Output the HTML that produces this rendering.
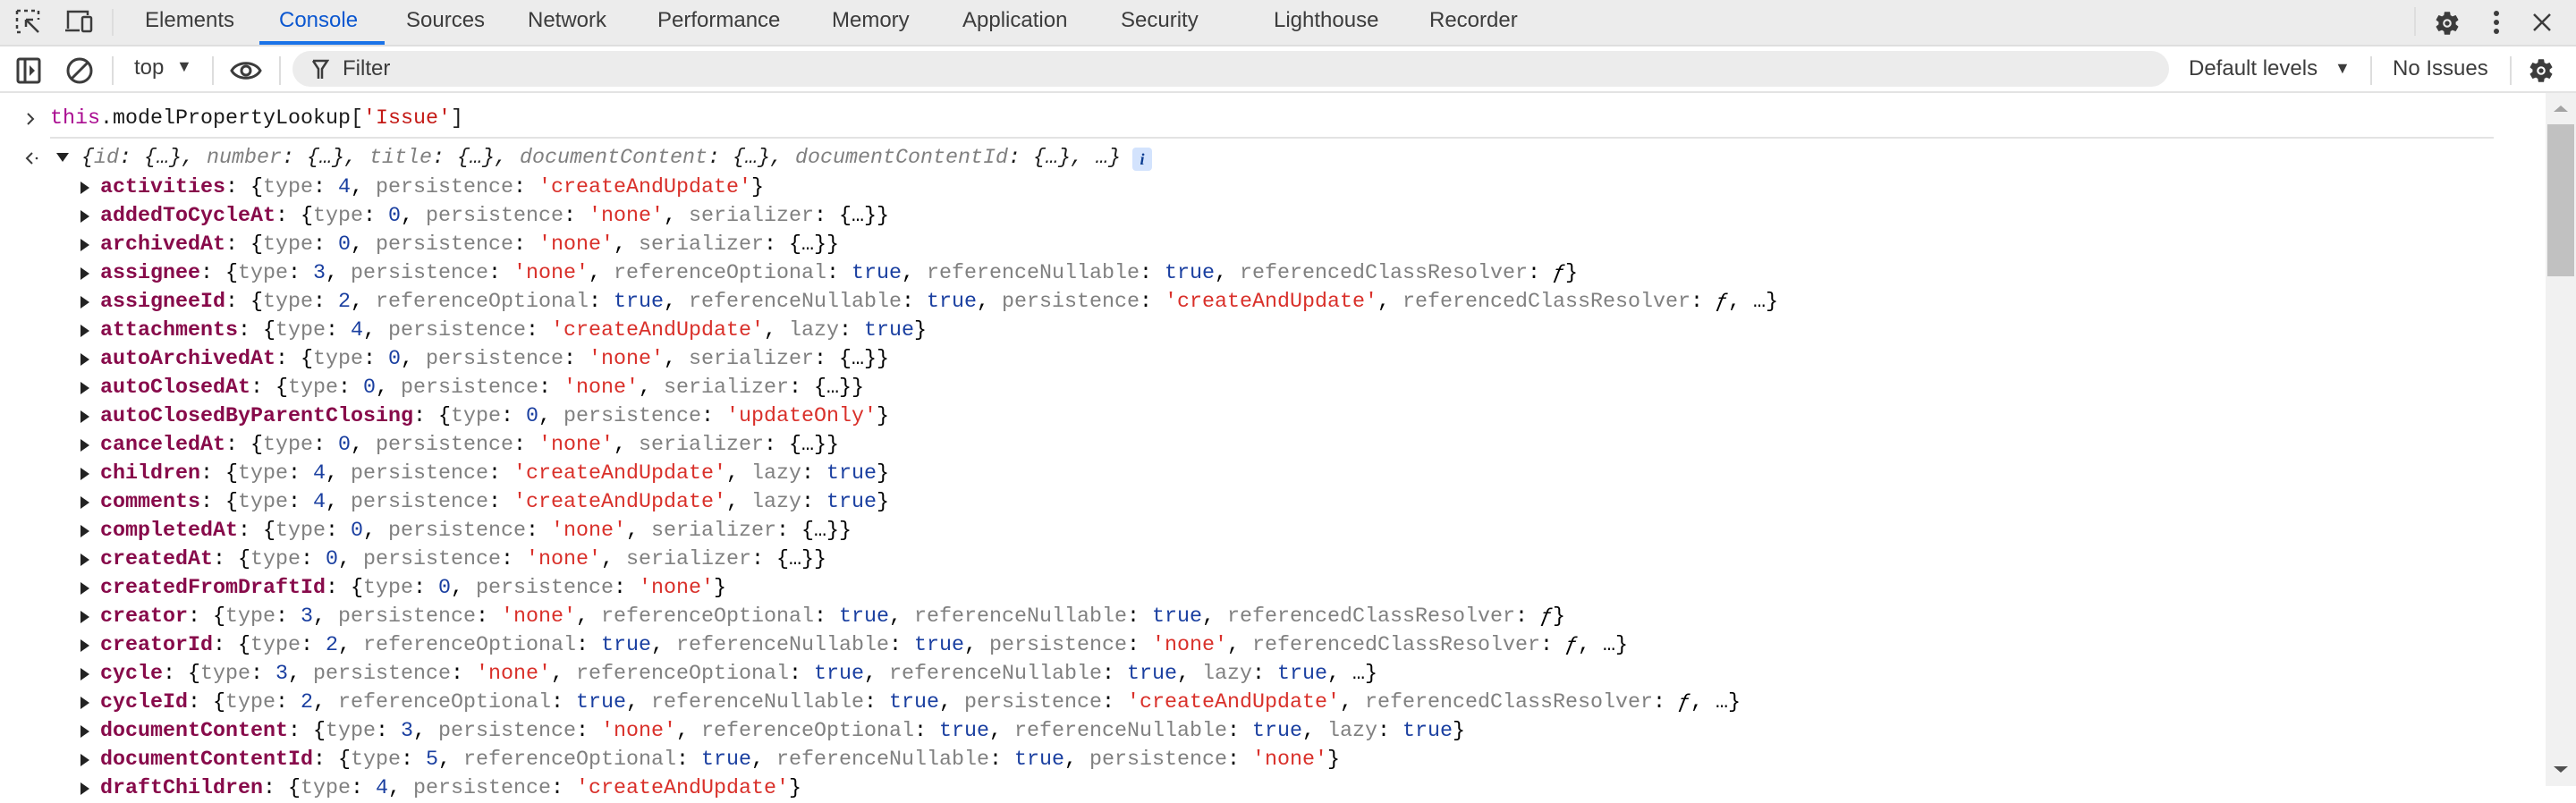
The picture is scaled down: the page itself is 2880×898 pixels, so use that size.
<!DOCTYPE html>
<html><head><meta charset="utf-8"><style>
*{margin:0;padding:0;box-sizing:border-box}
body{width:2880px;height:879px;overflow:hidden;background:#fff;font-family:"Liberation Sans",sans-serif;position:relative}
.tabs{position:absolute;left:0;top:0;width:2880px;height:52px;background:#ececec;border-bottom:2px solid #dedede}
.tab{position:absolute;top:9px;font-size:24px;color:#3c3c3c;white-space:nowrap}
.tb{position:absolute;left:0;top:52px;width:2880px;height:52px;background:#fff;border-bottom:2px solid #e3e3e3}
.sep{position:absolute;width:2px;background:#ddd}
.t{position:absolute;font-size:24px;color:#3c3c3c;white-space:nowrap}
.mono{font-family:"Liberation Mono",monospace;font-size:23.33px;line-height:32px;white-space:pre;position:absolute}
.k{color:#870a4a;font-weight:bold}
.g{color:#808080}
.n{color:#1a3fa0}
.s{color:#d9302a}
.b{color:#1a1a1a}
.tri{position:absolute;width:0;height:0;border-top:7px solid transparent;border-bottom:7px solid transparent;border-left:10px solid #222}
</style></head><body>
<div class="tabs">
<svg style="position:absolute;left:17px;top:10px" width="30" height="30" viewBox="0 0 30 30" fill="none" stroke="#3c3c3c" stroke-width="2.5"><path d="M2 2h4M10 2h4M18 2h4M2 2v4M2 10v4M2 18v4M2 26h4M26 2v4M26 10v2" stroke-dasharray="0"/><path d="M12 12l14 14M12 12h8M12 12v8"/></svg>
<svg style="position:absolute;left:72px;top:10px" width="34" height="30" viewBox="0 0 34 30" fill="none" stroke="#3c3c3c" stroke-width="2.5"><path d="M4 22V3h22v4"/><path d="M1 24h16"/><rect x="20" y="9" width="10" height="16" rx="1.5"/></svg>
<div class="sep" style="left:125px;top:10px;height:30px"></div>
<div class="tab" style="left:162px">Elements</div>
<div class="tab" style="left:312px;color:#0b57d0">Console</div>
<div style="position:absolute;left:290px;top:46px;width:140px;height:4px;background:#1a73e8"></div>
<div class="tab" style="left:454px">Sources</div>
<div class="tab" style="left:590px">Network</div>
<div class="tab" style="left:735px">Performance</div>
<div class="tab" style="left:930px">Memory</div>
<div class="tab" style="left:1076px">Application</div>
<div class="tab" style="left:1253px">Security</div>
<div class="tab" style="left:1424px">Lighthouse</div>
<div class="tab" style="left:1598px">Recorder</div>
<div class="sep" style="left:2699px;top:8px;height:32px"></div>
<svg style="position:absolute;left:2720px;top:10px" width="32" height="32" viewBox="0 0 24 24"><path fill="#3c3c3c" d="M19.14 12.94c.04-.3.06-.61.06-.94s-.02-.64-.07-.94l2.03-1.58a.49.49 0 0 0 .12-.61l-1.92-3.32a.49.49 0 0 0-.59-.22l-2.39.96a7 7 0 0 0-1.62-.94l-.36-2.54a.48.48 0 0 0-.48-.41h-3.84a.48.48 0 0 0-.47.41l-.36 2.54c-.59.24-1.13.57-1.62.94l-2.39-.96a.48.48 0 0 0-.59.22L2.74 8.87a.47.47 0 0 0 .12.61l2.03 1.58c-.05.3-.09.63-.09.94s.02.64.07.94l-2.03 1.58a.49.49 0 0 0-.12.61l1.92 3.32c.12.22.37.29.59.22l2.39-.96c.5.38 1.03.7 1.62.94l.36 2.54c.05.24.24.41.48.41h3.84c.24 0 .44-.17.47-.41l.36-2.54c.59-.24 1.13-.56 1.62-.94l2.39.96c.22.08.47 0 .59-.22l1.92-3.32a.47.47 0 0 0-.12-.61l-2.01-1.58zM12 15.6A3.6 3.6 0 1 1 12 8.4a3.6 3.6 0 0 1 0 7.2z"/><circle cx="12" cy="12" r="2" fill="#3c3c3c"/></svg>
<svg style="position:absolute;left:2784px;top:10px" width="14" height="30"><circle cx="7" cy="5" r="3" fill="#3c3c3c"/><circle cx="7" cy="15" r="3" fill="#3c3c3c"/><circle cx="7" cy="25" r="3" fill="#3c3c3c"/></svg>
<svg style="position:absolute;left:2830px;top:13px" width="24" height="24" stroke="#3c3c3c" stroke-width="2.5"><path d="M3 3l18 18M21 3L3 21"/></svg>
</div>
<div class="tb">
<svg style="position:absolute;left:18px;top:12px" width="28" height="30" viewBox="0 0 28 30" fill="none" stroke="#3c3c3c" stroke-width="3"><rect x="2" y="2" width="24" height="26" rx="2"/><path d="M10 2v26"/><path d="M15 9l6 6-6 6z" fill="#3c3c3c" stroke="none"/></svg>
<svg style="position:absolute;left:73px;top:11px" width="32" height="32" viewBox="0 0 32 32" fill="none" stroke="#3c3c3c" stroke-width="3"><circle cx="16" cy="16" r="13"/><path d="M7 25L25 7"/></svg>
<div class="sep" style="left:125px;top:11px;height:32px"></div>
<div class="t" style="left:150px;top:10px">top</div>
<div class="t" style="left:197px;top:12px;font-size:18px">▼</div>
<div class="sep" style="left:237px;top:11px;height:32px"></div>
<svg style="position:absolute;left:257px;top:12px" width="36" height="30" viewBox="0 0 36 30" fill="none" stroke="#3c3c3c" stroke-width="3"><path d="M2 15C8 4 28 4 34 15C28 26 8 26 2 15z"/><circle cx="18" cy="15" r="5"/></svg>
<div class="sep" style="left:312px;top:11px;height:32px"></div>
<div style="position:absolute;left:327px;top:5px;width:2098px;height:40px;background:#ececec;border-radius:20px"></div>
<svg style="position:absolute;left:348px;top:14px" width="20" height="24" viewBox="0 0 20 24" fill="none" stroke="#3c3c3c" stroke-width="2.5"><path d="M2 2h16l-6 9v11M8 22V11L2 2"/></svg>
<div class="t" style="left:383px;top:11px">Filter</div>
<div class="t" style="left:2447px;top:11px">Default levels</div>
<div class="t" style="left:2610px;top:14px;font-size:18px">▼</div>
<div class="sep" style="left:2650px;top:11px;height:32px"></div>
<div class="t" style="left:2675px;top:11px">No Issues</div>
<div class="sep" style="left:2806px;top:11px;height:32px"></div>
<svg style="position:absolute;left:2825px;top:11px" width="32" height="32" viewBox="0 0 24 24"><path fill="#3c3c3c" d="M19.14 12.94c.04-.3.06-.61.06-.94s-.02-.64-.07-.94l2.03-1.58a.49.49 0 0 0 .12-.61l-1.92-3.32a.49.49 0 0 0-.59-.22l-2.39.96a7 7 0 0 0-1.62-.94l-.36-2.54a.48.48 0 0 0-.48-.41h-3.84a.48.48 0 0 0-.47.41l-.36 2.54c-.59.24-1.130.57-1.62.94l-2.39-.96a.48.48 0 0 0-.59.22L2.74 8.87a.47.47 0 0 0 .12.61l2.03 1.58c-.05.3-.09.63-.09.94s.02.64.07.94l-2.03 1.58a.49.49 0 0 0-.12.61l1.92 3.32c.12.22.37.29.59.22l2.39-.96c.5.38 1.03.7 1.62.94l.36 2.54c.05.24.24.41.48.41h3.84c.24 0 .44-.17.47-.41l.36-2.54c.59-.24 1.13-.56 1.62-.94l2.39.96c.22.08.47 0 .59-.22l1.92-3.32a.47.47 0 0 0-.12-.61l-2.01-1.58zM12 15.6A3.6 3.6 0 1 1 12 8.4a3.6 3.6 0 0 1 0 7.2z"/><circle cx="12" cy="12" r="2" fill="#3c3c3c"/></svg>
</div>
<!-- scrollbar -->
<div style="position:absolute;left:2846px;top:104px;width:34px;height:775px;background:#f1f1f1"></div>
<div style="position:absolute;left:2848px;top:139px;width:30px;height:170px;background:#c1c1c1"></div>
<div style="position:absolute;left:2855px;top:118px;width:0;height:0;border-left:8px solid transparent;border-right:8px solid transparent;border-bottom:7px solid #a3a3a3"></div>
<div style="position:absolute;left:2855px;top:857px;width:0;height:0;border-left:8px solid transparent;border-right:8px solid transparent;border-top:7px solid #505050"></div>

<svg style="position:absolute;left:28px;top:124px" width="12" height="18" fill="none" stroke="#3c3c3c" stroke-width="2"><path d="M3 3l6 6-6 6"/></svg>
<div class="mono" style="left:56px;top:117px"><span style="color:#aa0d91">this</span><span class="b">.modelPropertyLookup[</span><span style="color:#c41a16">'Issue'</span><span class="b">]</span></div>
<div style="position:absolute;left:56px;top:153px;width:2732px;height:2px;background:#e3e3e3"></div>
<svg style="position:absolute;left:27px;top:168px" width="18" height="18" fill="none" stroke="#3c3c3c" stroke-width="2"><path d="M9 3L3 9l6 6"/><circle cx="14" cy="9" r="1.3" fill="#3c3c3c" stroke="none"/></svg>
<div class="tri" style="left:63px;top:171px;border-left:7px solid transparent;border-right:7px solid transparent;border-top:10px solid #222;border-bottom:0"></div>
<div class="mono" style="left:91px;top:161px;font-style:italic"><span class="b">{</span><span class="g">id</span><span class="b">: {…}, </span><span class="g">number</span><span class="b">: {…}, </span><span class="g">title</span><span class="b">: {…}, </span><span class="g">documentContent</span><span class="b">: {…}, </span><span class="g">documentContentId</span><span class="b">: {…}, …}</span></div>
<div style="position:absolute;left:1266px;top:165px;width:22px;height:26px;background:#d3e3fd;border-radius:4px;font:italic bold 18px 'Liberation Serif',serif;color:#0b3d91;text-align:center;line-height:26px">i</div>

<div id="rows"></div>
<div class="tri" style="left:90px;top:203px"></div><div class="mono" style="left:112px;top:194px"><span class="k">activities</span>: {<span class="g">type</span>: <span class="n">4</span>, <span class="g">persistence</span>: <span class="s">'createAndUpdate'</span>}</div>
<div class="tri" style="left:90px;top:235px"></div><div class="mono" style="left:112px;top:226px"><span class="k">addedToCycleAt</span>: {<span class="g">type</span>: <span class="n">0</span>, <span class="g">persistence</span>: <span class="s">'none'</span>, <span class="g">serializer</span>: {…}}</div>
<div class="tri" style="left:90px;top:267px"></div><div class="mono" style="left:112px;top:258px"><span class="k">archivedAt</span>: {<span class="g">type</span>: <span class="n">0</span>, <span class="g">persistence</span>: <span class="s">'none'</span>, <span class="g">serializer</span>: {…}}</div>
<div class="tri" style="left:90px;top:299px"></div><div class="mono" style="left:112px;top:290px"><span class="k">assignee</span>: {<span class="g">type</span>: <span class="n">3</span>, <span class="g">persistence</span>: <span class="s">'none'</span>, <span class="g">referenceOptional</span>: <span class="n">true</span>, <span class="g">referenceNullable</span>: <span class="n">true</span>, <span class="g">referencedClassResolver</span>: <i>ƒ</i>}</div>
<div class="tri" style="left:90px;top:331px"></div><div class="mono" style="left:112px;top:322px"><span class="k">assigneeId</span>: {<span class="g">type</span>: <span class="n">2</span>, <span class="g">referenceOptional</span>: <span class="n">true</span>, <span class="g">referenceNullable</span>: <span class="n">true</span>, <span class="g">persistence</span>: <span class="s">'createAndUpdate'</span>, <span class="g">referencedClassResolver</span>: <i>ƒ</i>, …}</div>
<div class="tri" style="left:90px;top:363px"></div><div class="mono" style="left:112px;top:354px"><span class="k">attachments</span>: {<span class="g">type</span>: <span class="n">4</span>, <span class="g">persistence</span>: <span class="s">'createAndUpdate'</span>, <span class="g">lazy</span>: <span class="n">true</span>}</div>
<div class="tri" style="left:90px;top:395px"></div><div class="mono" style="left:112px;top:386px"><span class="k">autoArchivedAt</span>: {<span class="g">type</span>: <span class="n">0</span>, <span class="g">persistence</span>: <span class="s">'none'</span>, <span class="g">serializer</span>: {…}}</div>
<div class="tri" style="left:90px;top:427px"></div><div class="mono" style="left:112px;top:418px"><span class="k">autoClosedAt</span>: {<span class="g">type</span>: <span class="n">0</span>, <span class="g">persistence</span>: <span class="s">'none'</span>, <span class="g">serializer</span>: {…}}</div>
<div class="tri" style="left:90px;top:459px"></div><div class="mono" style="left:112px;top:450px"><span class="k">autoClosedByParentClosing</span>: {<span class="g">type</span>: <span class="n">0</span>, <span class="g">persistence</span>: <span class="s">'updateOnly'</span>}</div>
<div class="tri" style="left:90px;top:491px"></div><div class="mono" style="left:112px;top:482px"><span class="k">canceledAt</span>: {<span class="g">type</span>: <span class="n">0</span>, <span class="g">persistence</span>: <span class="s">'none'</span>, <span class="g">serializer</span>: {…}}</div>
<div class="tri" style="left:90px;top:523px"></div><div class="mono" style="left:112px;top:514px"><span class="k">children</span>: {<span class="g">type</span>: <span class="n">4</span>, <span class="g">persistence</span>: <span class="s">'createAndUpdate'</span>, <span class="g">lazy</span>: <span class="n">true</span>}</div>
<div class="tri" style="left:90px;top:555px"></div><div class="mono" style="left:112px;top:546px"><span class="k">comments</span>: {<span class="g">type</span>: <span class="n">4</span>, <span class="g">persistence</span>: <span class="s">'createAndUpdate'</span>, <span class="g">lazy</span>: <span class="n">true</span>}</div>
<div class="tri" style="left:90px;top:587px"></div><div class="mono" style="left:112px;top:578px"><span class="k">completedAt</span>: {<span class="g">type</span>: <span class="n">0</span>, <span class="g">persistence</span>: <span class="s">'none'</span>, <span class="g">serializer</span>: {…}}</div>
<div class="tri" style="left:90px;top:619px"></div><div class="mono" style="left:112px;top:610px"><span class="k">createdAt</span>: {<span class="g">type</span>: <span class="n">0</span>, <span class="g">persistence</span>: <span class="s">'none'</span>, <span class="g">serializer</span>: {…}}</div>
<div class="tri" style="left:90px;top:651px"></div><div class="mono" style="left:112px;top:642px"><span class="k">createdFromDraftId</span>: {<span class="g">type</span>: <span class="n">0</span>, <span class="g">persistence</span>: <span class="s">'none'</span>}</div>
<div class="tri" style="left:90px;top:683px"></div><div class="mono" style="left:112px;top:674px"><span class="k">creator</span>: {<span class="g">type</span>: <span class="n">3</span>, <span class="g">persistence</span>: <span class="s">'none'</span>, <span class="g">referenceOptional</span>: <span class="n">true</span>, <span class="g">referenceNullable</span>: <span class="n">true</span>, <span class="g">referencedClassResolver</span>: <i>ƒ</i>}</div>
<div class="tri" style="left:90px;top:715px"></div><div class="mono" style="left:112px;top:706px"><span class="k">creatorId</span>: {<span class="g">type</span>: <span class="n">2</span>, <span class="g">referenceOptional</span>: <span class="n">true</span>, <span class="g">referenceNullable</span>: <span class="n">true</span>, <span class="g">persistence</span>: <span class="s">'none'</span>, <span class="g">referencedClassResolver</span>: <i>ƒ</i>, …}</div>
<div class="tri" style="left:90px;top:747px"></div><div class="mono" style="left:112px;top:738px"><span class="k">cycle</span>: {<span class="g">type</span>: <span class="n">3</span>, <span class="g">persistence</span>: <span class="s">'none'</span>, <span class="g">referenceOptional</span>: <span class="n">true</span>, <span class="g">referenceNullable</span>: <span class="n">true</span>, <span class="g">lazy</span>: <span class="n">true</span>, …}</div>
<div class="tri" style="left:90px;top:779px"></div><div class="mono" style="left:112px;top:770px"><span class="k">cycleId</span>: {<span class="g">type</span>: <span class="n">2</span>, <span class="g">referenceOptional</span>: <span class="n">true</span>, <span class="g">referenceNullable</span>: <span class="n">true</span>, <span class="g">persistence</span>: <span class="s">'createAndUpdate'</span>, <span class="g">referencedClassResolver</span>: <i>ƒ</i>, …}</div>
<div class="tri" style="left:90px;top:811px"></div><div class="mono" style="left:112px;top:802px"><span class="k">documentContent</span>: {<span class="g">type</span>: <span class="n">3</span>, <span class="g">persistence</span>: <span class="s">'none'</span>, <span class="g">referenceOptional</span>: <span class="n">true</span>, <span class="g">referenceNullable</span>: <span class="n">true</span>, <span class="g">lazy</span>: <span class="n">true</span>}</div>
<div class="tri" style="left:90px;top:843px"></div><div class="mono" style="left:112px;top:834px"><span class="k">documentContentId</span>: {<span class="g">type</span>: <span class="n">5</span>, <span class="g">referenceOptional</span>: <span class="n">true</span>, <span class="g">referenceNullable</span>: <span class="n">true</span>, <span class="g">persistence</span>: <span class="s">'none'</span>}</div>
<div class="tri" style="left:90px;top:875px"></div><div class="mono" style="left:112px;top:866px"><span class="k">draftChildren</span>: {<span class="g">type</span>: <span class="n">4</span>, <span class="g">persistence</span>: <span class="s">'createAndUpdate'</span>}</div>
</body></html>
